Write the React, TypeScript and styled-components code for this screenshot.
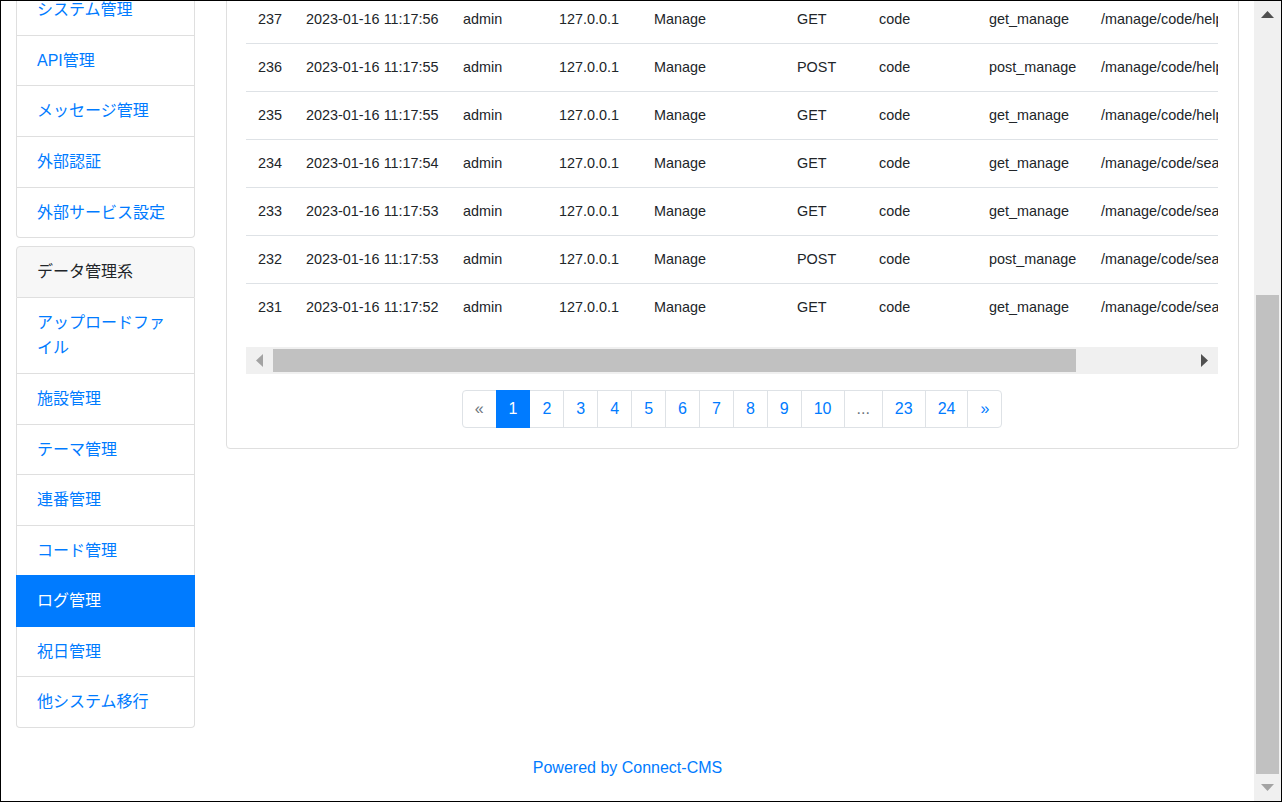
import React, { useLayoutEffect, useRef } from "react";
import styled, { createGlobalStyle, css } from "styled-components";

const GlobalStyle = createGlobalStyle`
  html, body { margin: 0; padding: 0; background: #fff; }
  body {
    font-family: "Liberation Sans", "Noto Sans CJK JP", Arial, sans-serif;
    font-size: 16px;
    color: #212529;
  }
  *, *::before, *::after { box-sizing: border-box; }
`;

const Frame = styled.div`
  width: 1282px;
  height: 802px;
  border: 1px solid #000;
  display: flex;
  overflow: hidden;
  background: #fff;
`;

const Viewport = styled.div`
  flex: 1;
  min-width: 0;
  height: 100%;
  overflow: hidden;
`;

const NavBar = styled.header`
  height: 56px;
  margin-bottom: 24px;
  padding: 0 16px;
  display: flex;
  align-items: center;
  background: #343a40;
  color: #fff;
  font-size: 20px;
`;

const Container = styled.div`
  padding: 0 15px;
`;

const Row = styled.div`
  display: flex;
  align-items: flex-start;
  gap: 31px;
`;

const Sidebar = styled.nav`
  width: 179px;
  flex-shrink: 0;
  display: flex;
  flex-direction: column;
  gap: 8px;
`;

const SideCard = styled.div`
  display: flex;
  flex-direction: column;
`;

const SideEntry = styled.a<{ $header?: boolean; $active?: boolean }>`
  display: block;
  position: relative;
  padding: 12px 20px;
  line-height: 25.6px;
  font-size: 16px;
  border: 1px solid #dfdfdf;
  border-top-width: 0;
  background: #fff;
  color: #007bff;
  text-decoration: none;
  &:first-child {
    border-top-width: 1px;
    border-radius: 4px 4px 0 0;
  }
  &:last-child {
    border-radius: 0 0 4px 4px;
  }
  ${(p) =>
    p.$header &&
    css`
      background: #f7f7f7;
      color: #212529;
    `}
  ${(p) =>
    p.$active &&
    css`
      z-index: 1;
      margin-top: -1px;
      border-top-width: 1px;
      background: #007bff;
      border-color: #007bff;
      color: #fff;
    `}
`;

const Main = styled.main`
  flex: 1;
  min-width: 0;
`;

const Card = styled.section`
  border: 1px solid #dfdfdf;
  border-radius: 4px;
  background: #fff;
`;

const CardHeader = styled.div`
  padding: 14.6px 20px;
  line-height: 24px;
  background: #f7f7f7;
  border-bottom: 1px solid #dfdfdf;
`;

const CardBody = styled.div`
  padding: 20px 20px 20px 19px;
`;

const TableScroll = styled.div`
  overflow: hidden;
`;

const Table = styled.table`
  width: 1111px;
  table-layout: fixed;
  border-collapse: separate;
  border-spacing: 0;
  font-size: 14.4px;
  color: #212529;
  margin-bottom: 16px;
`;

const Th = styled.th`
  text-align: left;
  padding: 12px;
  line-height: 23px;
  border-top: 1px solid #dee2e6;
  border-bottom: 2px solid #dee2e6;
  white-space: nowrap;
  overflow: hidden;
`;

const Td = styled.td`
  padding: 12px;
  line-height: 23px;
  border-top: 1px solid #dee2e6;
  white-space: nowrap;
  overflow: hidden;
  vertical-align: top;
`;

const HScrollbar = styled.div`
  display: flex;
  height: 27px;
  background: #f0f0f0;
`;

const ArrowBtn = styled.div<{ $size: number }>`
  flex: 0 0 ${(p) => p.$size}px;
  height: ${(p) => p.$size}px;
  display: flex;
  align-items: center;
  justify-content: center;
`;

const HTrack = styled.div`
  flex: 1;
  padding: 2px 0;
  display: flex;
`;

const HThumb = styled.div`
  width: 803px;
  height: 100%;
  background: #c1c1c1;
`;

const Pagination = styled.ul`
  display: flex;
  justify-content: center;
  list-style: none;
  margin: 16px 0 0;
  padding: 0;
`;

const PageItem = styled.li`
  display: block;
  margin-left: -1px;
  &:first-child { margin-left: 0; }
  &:first-child > span { border-radius: 4px 0 0 4px; }
  &:last-child > span { border-radius: 0 4px 4px 0; }
`;

const PageLink = styled.span<{ $active?: boolean; $disabled?: boolean }>`
  display: block;
  position: relative;
  padding: 8px 12px;
  line-height: 20px;
  font-size: 16px;
  border: 1px solid #dee2e6;
  background: #fff;
  color: #007bff;
  ${(p) =>
    p.$disabled &&
    css`
      color: #6c757d;
    `}
  ${(p) =>
    p.$active &&
    css`
      z-index: 1;
      background: #007bff;
      border-color: #007bff;
      color: #fff;
    `}
`;

const Footer = styled.footer`
  padding: 28px 0 21px;
  line-height: 24px;
  text-align: center;
  font-size: 16px;
`;

const FooterLink = styled.a`
  color: #007bff;
  text-decoration: none;
`;

const VScrollbar = styled.aside`
  width: 27px;
  flex-shrink: 0;
  height: 100%;
  background: #f0f0f0;
  display: flex;
  flex-direction: column;
`;

const VTrack = styled.div`
  flex: 1;
  padding: 0 2px;
  display: flex;
  flex-direction: column;
  justify-content: flex-end;
`;

const VThumb = styled.div`
  height: 479px;
  background: #c1c1c1;
`;

type Tri = "up" | "down" | "left" | "right";
const Triangle = ({ dir, color }: { dir: Tri; color: string }) => {
  const vertical = dir === "up" || dir === "down";
  const w = vertical ? 13 : 7;
  const h = vertical ? 7 : 13;
  const pts =
    dir === "up"
      ? "0,7 6.5,0 13,7"
      : dir === "down"
      ? "0,0 13,0 6.5,7"
      : dir === "left"
      ? "7,0 7,13 0,6.5"
      : "0,0 7,6.5 0,13";
  return (
    <svg width={w} height={h} viewBox={`0 0 ${w} ${h}`}>
      <polygon points={pts} fill={color} />
    </svg>
  );
};

const systemMenu = [
  "サイト管理",
  "ページ管理",
  "ユーザ管理",
  "グループ管理",
  "セキュリティ管理",
  "プラグイン管理",
  "システム管理",
  "API管理",
  "メッセージ管理",
  "外部認証",
  "外部サービス設定",
];

const dataMenu = [
  "アップロードファイル",
  "施設管理",
  "テーマ管理",
  "連番管理",
  "コード管理",
  "ログ管理",
  "祝日管理",
  "他システム移行",
];

const columns = [
  { label: "ID", width: 48 },
  { label: "日時", width: 157 },
  { label: "ログインID", width: 96 },
  { label: "IPアドレス", width: 95 },
  { label: "種別", width: 143 },
  { label: "メソッド", width: 82 },
  { label: "プラグイン", width: 110 },
  { label: "ルート名", width: 112 },
  { label: "URI", width: 268 },
];

type Log = [number, string, string, string];
const logs: Log[] = [
  [242, "11:18:02", "GET", "/manage/code/helpMessages"],
  [241, "11:18:01", "POST", "/manage/code/helpMessages"],
  [240, "11:18:00", "GET", "/manage/code/helpMessages"],
  [239, "11:17:58", "GET", "/manage/code/helpMessages"],
  [238, "11:17:57", "POST", "/manage/code/helpMessages"],
  [237, "11:17:56", "GET", "/manage/code/helpMessages"],
  [236, "11:17:55", "POST", "/manage/code/helpMessages"],
  [235, "11:17:55", "GET", "/manage/code/helpMessages"],
  [234, "11:17:54", "GET", "/manage/code/searches"],
  [233, "11:17:53", "GET", "/manage/code/searches"],
  [232, "11:17:53", "POST", "/manage/code/searches"],
  [231, "11:17:52", "GET", "/manage/code/searches"],
];

const pages: { label: string; active?: boolean; disabled?: boolean }[] = [
  { label: "«", disabled: true },
  { label: "1", active: true },
  ...["2", "3", "4", "5", "6", "7", "8", "9", "10"].map((l) => ({ label: l })),
  { label: "...", disabled: true },
  { label: "23" },
  { label: "24" },
  { label: "»" },
];

export default function App() {
  const viewportRef = useRef<HTMLDivElement>(null);

  useLayoutEffect(() => {
    const vp = viewportRef.current;
    if (vp) vp.scrollTop = vp.scrollHeight;
  }, []);

  return (
    <>
      <GlobalStyle />
      <Frame>
        <Viewport ref={viewportRef}>
          <NavBar>Connect-CMS</NavBar>
          <Container>
            <Row>
              <Sidebar>
                <SideCard>
                  <SideEntry $header>システム系</SideEntry>
                  {systemMenu.map((m) => (
                    <SideEntry key={m} href="#">
                      {m}
                    </SideEntry>
                  ))}
                </SideCard>
                <SideCard>
                  <SideEntry $header>データ管理系</SideEntry>
                  {dataMenu.map((m) => (
                    <SideEntry key={m} href="#" $active={m === "ログ管理"}>
                      {m}
                    </SideEntry>
                  ))}
                </SideCard>
              </Sidebar>
              <Main>
                <Card>
                  <CardHeader>ログ管理</CardHeader>
                  <CardBody>
                    <TableScroll>
                      <Table>
                        <colgroup>
                          {columns.map((c) => (
                            <col key={c.label} style={{ width: c.width }} />
                          ))}
                        </colgroup>
                        <thead>
                          <tr>
                            {columns.map((c) => (
                              <Th key={c.label}>{c.label}</Th>
                            ))}
                          </tr>
                        </thead>
                        <tbody>
                          {logs.map(([id, time, method, uri]) => (
                            <tr key={id}>
                              <Td>{id}</Td>
                              <Td>2023-01-16 {time}</Td>
                              <Td>admin</Td>
                              <Td>127.0.0.1</Td>
                              <Td>Manage</Td>
                              <Td>{method}</Td>
                              <Td>code</Td>
                              <Td>{method === "GET" ? "get_manage" : "post_manage"}</Td>
                              <Td>{uri}</Td>
                            </tr>
                          ))}
                        </tbody>
                      </Table>
                    </TableScroll>
                    <HScrollbar>
                      <ArrowBtn $size={27}>
                        <Triangle dir="left" color="#a3a3a3" />
                      </ArrowBtn>
                      <HTrack>
                        <HThumb />
                      </HTrack>
                      <ArrowBtn $size={27}>
                        <Triangle dir="right" color="#505050" />
                      </ArrowBtn>
                    </HScrollbar>
                    <Pagination>
                      {pages.map((p) => (
                        <PageItem key={p.label}>
                          <PageLink $active={p.active} $disabled={p.disabled}>
                            {p.label}
                          </PageLink>
                        </PageItem>
                      ))}
                    </Pagination>
                  </CardBody>
                </Card>
              </Main>
            </Row>
          </Container>
          <Footer>
            <FooterLink href="#">Powered by Connect-CMS</FooterLink>
          </Footer>
        </Viewport>
        <VScrollbar>
          <ArrowBtn $size={27}>
            <Triangle dir="up" color="#505050" />
          </ArrowBtn>
          <VTrack>
            <VThumb />
          </VTrack>
          <ArrowBtn $size={27}>
            <Triangle dir="down" color="#a3a3a3" />
          </ArrowBtn>
        </VScrollbar>
      </Frame>
    </>
  );
}
